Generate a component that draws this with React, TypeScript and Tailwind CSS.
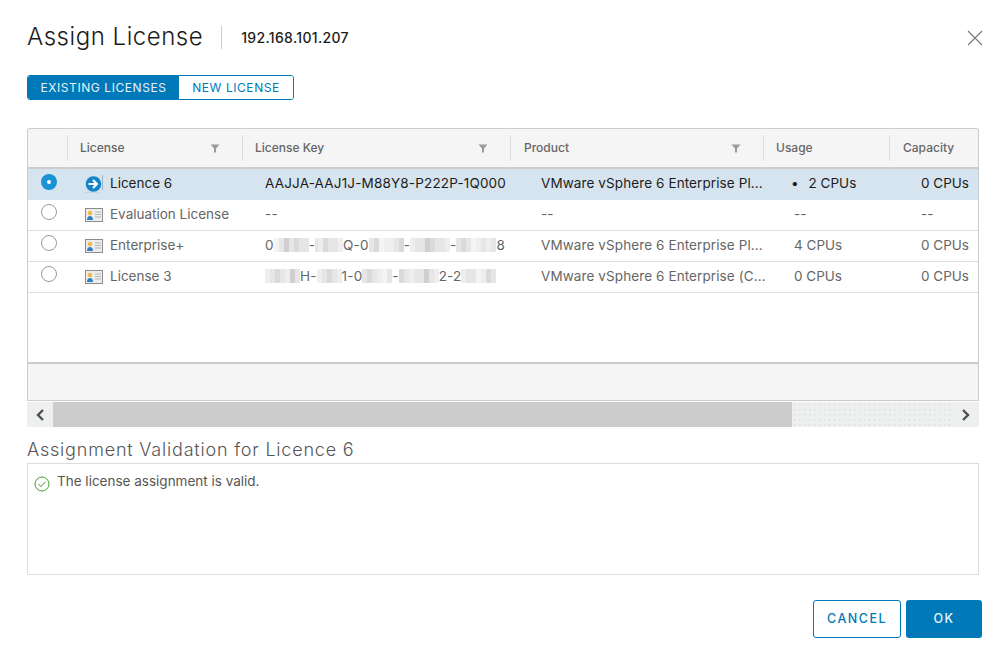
import type { ReactNode } from "react";

const GRID = "grid grid-cols-[39px_175px_268px_253px_126px_90px]";

const BLOCK_SHADES: Record<string, string> = {
  a: "w-[5px] bg-[#eeeeee]",
  b: "w-[5px] bg-[#e6e6e6]",
  c: "w-[5px] bg-[#dadada]",
  d: "w-[5px] bg-[#cfcfcf]",
  e: "w-[5px] bg-[#f4f4f4]",
  s: "w-[3px] bg-[#e6e6e6]",
};

interface LicenseRow {
  name: string;
  key: ReactNode;
  product: string;
  usage: string;
  capacity: string;
}

function Smudge({ pattern }: { pattern: string }) {
  return (
    <span className="inline-flex h-[14px] align-[-2px]">
      {pattern.split("").map((shade, i) => (
        <span key={i} className={`h-full ${BLOCK_SHADES[shade]}`} />
      ))}
    </span>
  );
}

const ROWS: LicenseRow[] = [
  {
    name: "Evaluation License",
    key: "--",
    product: "--",
    usage: "--",
    capacity: "--",
  },
  {
    name: "Enterprise+",
    key: (
      <>
        0<Smudge pattern="ebdbcbb" />-<Smudge pattern="sacbba" />Q-0
        <Smudge pattern="bceaabc" />-<Smudge pattern="abbdcbba" />-<Smudge pattern="bcbeabab" />8
      </>
    ),
    product: "VMware vSphere 6 Enterprise Pl...",
    usage: "4 CPUs",
    capacity: "0 CPUs",
  },
  {
    name: "License 3",
    key: (
      <>
        <Smudge pattern="abcbadb" />H-<Smudge pattern="abcba" />1-0
        <Smudge pattern="bcbaeb" />-<Smudge pattern="cbabbdba" />2-2<Smudge pattern="abbeacb" />
      </>
    ),
    product: "VMware vSphere 6 Enterprise (C...",
    usage: "0 CPUs",
    capacity: "0 CPUs",
  },
];

function FilterIcon() {
  return (
    <svg width="10" height="10" viewBox="0 0 10 10" className="shrink-0">
      <path d="M0.5 1.5h9L6 5.5V9.5H4V5.5z" fill="#9a9a9a" />
    </svg>
  );
}

function HeaderCell({ label, filter, nudge }: { label: string; filter?: boolean; nudge?: boolean }) {
  return (
    <div className="flex h-[26px] items-center justify-between border-l border-[#dddddd] pl-[12px] pr-[22px]">
      <span className={`text-[12px] font-medium text-[#666666] ${nudge ? "ml-[1px]" : ""}`}>{label}</span>
      {filter && <FilterIcon />}
    </div>
  );
}

function CardIcon() {
  return (
    <svg width="18" height="14" viewBox="0 0 18 14" className="shrink-0">
      <rect x="0.5" y="0.5" width="17" height="13" fill="#ececec" stroke="#8c8c8c" />
      <circle cx="5" cy="5" r="2.2" fill="#f0b840" />
      <path d="M2 12c0-3 1.3-4 3-4s3 1 3 4z" fill="#2f7fc4" />
      <path d="M10 4h6M10 6.5h6M10 9h6" stroke="#b5b5b5" />
    </svg>
  );
}

function ArrowIcon() {
  return (
    <svg width="18" height="18" viewBox="0 0 18 18" className="shrink-0">
      <path d="M17.5 0v15" stroke="#9fb2c0" />
      <path d="M0 17.5h15" stroke="#b9c8d3" strokeDasharray="1 1" />
      <circle cx="8.5" cy="9" r="7.8" fill="#1584c8" />
      <path d="M3.5 9h8M8 5l4 4-4 4" fill="none" stroke="white" strokeWidth="2" />
    </svg>
  );
}

function Radio({ checked }: { checked?: boolean }) {
  if (checked) {
    return (
      <span className="flex h-[16px] w-[16px] items-center justify-center rounded-full bg-[#1a93d5]">
        <span className="h-[4px] w-[4px] rounded-full bg-white" />
      </span>
    );
  }
  return <span className="h-[16px] w-[16px] rounded-full border border-[#9a9a9a] bg-white" />;
}

function Chevron({ dir }: { dir: "left" | "right" }) {
  return (
    <svg width="10" height="12" viewBox="0 0 10 12">
      <path
        d={dir === "left" ? "M8 1L3 6l5 5" : "M2 1l5 5-5 5"}
        fill="none"
        stroke="#4f4f4f"
        strokeWidth="2.4"
      />
    </svg>
  );
}

export default function App() {
  return (
    <div className="flex h-[662px] w-[1006px] flex-col overflow-hidden bg-white pl-[27px] font-['Inter','Liberation_Sans',sans-serif] text-[13.5px]">
      <div className="mt-[25px] flex h-[24px] items-center pr-[23px]">
        <h1 className="text-[24px] font-light leading-none tracking-[0.53px] text-[#1c1c1c]">Assign License</h1>
        <span className="ml-[18px] h-[23px] w-px bg-[#cccccc]" />
        <span className="ml-[19px] text-[14px] font-medium tracking-[0.33px] text-[#1c1c1c]">192.168.101.207</span>
        <svg width="16" height="16" viewBox="0 0 16 16" className="ml-auto mt-[2px]">
          <path d="M1 1l14 14M15 1L1 15" stroke="#777777" strokeWidth="1.1" />
        </svg>
      </div>

      <div className="mt-[26px] flex h-[25px] w-[267px] overflow-hidden rounded-[3px] border border-[#0079b8] text-[12px] tracking-[0.57px]">
        <div className="flex w-[151px] items-center justify-center bg-[#0079b8] text-[#e6f2f8]">EXISTING LICENSES</div>
        <div className="flex flex-1 items-center justify-center bg-white text-[#0079b8]">NEW LICENSE</div>
      </div>

      <div className="mt-[28px] w-[952px] overflow-hidden rounded-t-[3px] border-x border-t border-[#cccccc]">
        <div className={`${GRID} h-[40px] items-center border-b-2 border-[#cccccc] bg-[#f5f5f5] pb-[1px]`}>
          <div />
          <HeaderCell label="License" filter />
          <HeaderCell label="License Key" filter />
          <HeaderCell label="Product" filter nudge />
          <HeaderCell label="Usage" />
          <HeaderCell label="Capacity" nudge />
        </div>

        <div className={`${GRID} h-[31px] items-center bg-[#d6e4ef] pb-[2px] text-[#1c1c1c]`}>
          <div className="flex justify-center pb-[3px] pl-[3px]"><Radio checked /></div>
          <div className="flex items-center gap-[7px] pl-[18px]"><ArrowIcon />Licence 6</div>
          <div className="pl-[23px] tracking-[0.17px]">AAJJA-AAJ1J-M88Y8-P222P-1Q000</div>
          <div className="whitespace-nowrap pl-[31px] tracking-[0.1px]">VMware vSphere 6 Enterprise Pl...</div>
          <div className="pl-[28px]"><span className="mr-[10px]">•</span>2 CPUs</div>
          <div className="pl-[32px]">0 CPUs</div>
        </div>
        {ROWS.map((row) => (
          <div key={row.name} className={`${GRID} h-[31px] items-center border-b border-[#dddddd] pb-[1px] text-[#666666]`}>
            <div className="flex justify-center pb-[5px] pl-[3px]"><Radio /></div>
            <div className="flex items-center gap-[7px] pl-[18px]"><CardIcon />{row.name}</div>
            <div className="pl-[23px] tracking-[0.17px]">{row.key}</div>
            <div className="whitespace-nowrap pl-[31px] tracking-[0.1px]">{row.product}</div>
            <div className="pl-[31px]">{row.usage}</div>
            <div className="pl-[32px]">{row.capacity}</div>
          </div>
        ))}

        <div className="h-[71px] border-b-2 border-[#cccccc]" />
        <div className="h-[37px] border-b border-[#cccccc] bg-[#f5f5f5]" />
      </div>

      <div className="mt-[1px] flex h-[25px] w-[952px] bg-[#eef0ef]">
        <div className="flex w-[26px] items-center justify-center"><Chevron dir="left" /></div>
        <div className="w-[739px] bg-[#cccccc]" />
        <div className="flex-1 bg-[radial-gradient(#e2e4e3_1px,transparent_1px)] bg-[size:5px_5px]" />
        <div className="flex w-[26px] items-center justify-center"><Chevron dir="right" /></div>
      </div>

      <h2 className="mt-[11px] h-[25px] text-[18px] font-light leading-[24px] tracking-[0.8px] text-[#565656]">Assignment Validation for Licence 6</h2>

      <div className="h-[112px] w-[952px] border border-[#dddddd] p-[6px]">
        <div className="flex items-start gap-[7px] text-[#565656]">
          <svg width="16" height="16" viewBox="0 0 16 16" className="mt-[6px] shrink-0">
            <circle cx="8" cy="8" r="7" fill="none" stroke="#4a9a2c" />
            <path d="M4.5 8l2.5 2.7 4.5-5" fill="none" stroke="#4a9a2c" />
          </svg>
          <span className="text-[13.5px] leading-[22px]">The license assignment is valid.</span>
        </div>
      </div>

      <div className="mt-[25px] flex w-[955px] justify-end gap-[5px] text-[12.5px] font-medium tracking-[1.5px]">
        <button className="h-[38px] w-[88px] rounded-[3px] border border-[#0079b8] bg-white text-[#0079b8]">CANCEL</button>
        <button className="h-[38px] w-[76px] rounded-[3px] bg-[#0079b8] text-[#eaf4f9]">OK</button>
      </div>
    </div>
  );
}
